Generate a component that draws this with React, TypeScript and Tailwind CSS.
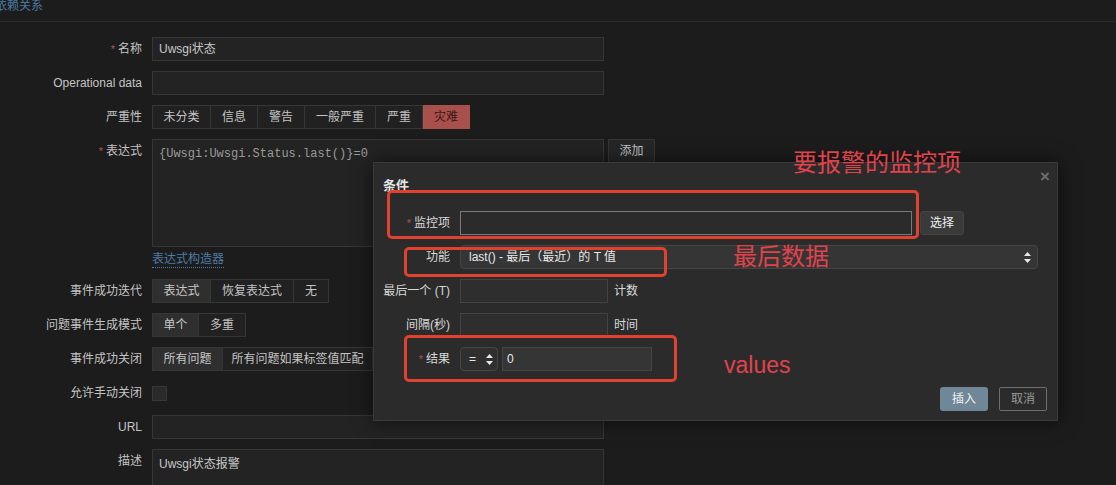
import React from "react";

const font = { fontFamily: '"Liberation Sans", "Noto Sans CJK SC", sans-serif' };

function Req() {
  return <span className="text-[#b3524c] mr-[3px] text-[11px]">*</span>;
}

function Row({ label, req, children, className = "" }: { label: React.ReactNode; req?: boolean; children: React.ReactNode; className?: string }) {
  return (
    <div className={"flex items-start gap-[10px] " + className}>
      <div className="w-[142px] h-[24px] flex items-center justify-end text-[12px] text-[#c4c4c4] whitespace-nowrap">
        {req && <Req />}
        {label}
      </div>
      <div className="flex-1">{children}</div>
    </div>
  );
}

function Input({ value, w = "w-[452px]" }: { value?: string; w?: string }) {
  return (
    <div className={`${w} h-[24px] bg-[#232323] border border-[#363636] flex items-center px-[6px] text-[12px] text-[#c8c8c8]`}>
      {value}
    </div>
  );
}

function Seg({ items, active, red }: { items: { t: string; w: string }[]; active?: number; red?: number }) {
  return (
    <div className="flex h-[24px]">
      {items.map((it, i) => (
        <div
          key={i}
          className={
            `${it.w} h-[24px] flex items-center justify-center text-[12px] border-y border-r border-[#363636] ` +
            (i === 0 ? "border-l " : "") +
            (red === i
              ? "bg-[#a8514c] text-[#3c1512] border-[#a8514c]"
              : active === i
              ? "bg-[#2f2f2f] text-[#c8c8c8]"
              : "bg-[#212121] text-[#c4c4c4]")
          }
        >
          {it.t}
        </div>
      ))}
    </div>
  );
}

function UpDown() {
  return (
    <svg width="7" height="11" viewBox="0 0 7 11">
      <path d="M3.5 0 L7 4 L0 4 Z" fill="#e8e8e8" />
      <path d="M3.5 11 L7 7 L0 7 Z" fill="#e8e8e8" />
    </svg>
  );
}

function DRow({ label, req, children, className = "" }: { label: React.ReactNode; req?: boolean; children: React.ReactNode; className?: string }) {
  return (
    <div className={"flex items-center gap-[10px] h-[24px] " + className}>
      <div className="w-[67px] flex items-center justify-end text-[12px] text-[#d8d8d8] whitespace-nowrap">
        {req && <Req />}
        {label}
      </div>
      {children}
    </div>
  );
}

export default function App() {
  return (
    <div className="relative w-[1116px] h-[485px] overflow-hidden bg-[#1c1c1c]" style={font}>
      {/* tab header */}
      <div className="h-[22px] border-b border-[#2a2a2a]">
        <div className="ml-[-5px] text-[12px] leading-[12px] text-[#4b78a1]">依赖关系</div>
      </div>

      {/* form */}
      <div className="pt-[15px] flex flex-col">
        <Row label="名称" req>
          <Input value="Uwsgi状态" />
        </Row>
        <Row label="Operational data" className="mt-[10px]">
          <Input />
        </Row>
        <Row label="严重性" className="mt-[10px]">
          <Seg
            items={[
              { t: "未分类", w: "w-[59px]" },
              { t: "信息", w: "w-[47px]" },
              { t: "警告", w: "w-[47px]" },
              { t: "一般严重", w: "w-[71px]" },
              { t: "严重", w: "w-[47px]" },
              { t: "灾难", w: "w-[47px]" },
            ]}
            red={5}
          />
        </Row>
        <Row label="表达式" req className="mt-[10px]">
          <div className="flex items-start gap-[4px]">
            <div
              className="w-[452px] h-[108px] bg-[#232323] border border-[#363636] px-[6px] pt-[5px] text-[12px] text-[#9a9a9a]"
              style={{ fontFamily: '"Liberation Mono", monospace' }}
            >
              {"{Uwsgi:Uwsgi.Status.last()}=0"}
            </div>
            <div className="w-[47px] h-[24px] bg-[#262626] border border-[#363636] flex items-center justify-center text-[12px] text-[#c4c4c4]">
              添加
            </div>
          </div>
        </Row>
        <div className="ml-[152px] mt-[5px] h-[18px] flex items-start">
          <span className="text-[12px] text-[#4e7ca6] border-b border-dotted border-[#4e7ca6] leading-[15px]">表达式构造器</span>
        </div>
        <Row label="事件成功迭代" className="mt-[9px]">
          <Seg
            items={[
              { t: "表达式", w: "w-[59px]" },
              { t: "恢复表达式", w: "w-[83px]" },
              { t: "无", w: "w-[35px]" },
            ]}
            active={0}
          />
        </Row>
        <Row label="问题事件生成模式" className="mt-[10px]">
          <Seg
            items={[
              { t: "单个", w: "w-[47px]" },
              { t: "多重", w: "w-[47px]" },
            ]}
            active={0}
          />
        </Row>
        <Row label="事件成功关闭" className="mt-[10px]">
          <Seg
            items={[
              { t: "所有问题", w: "w-[71px]" },
              { t: "所有问题如果标签值匹配", w: "w-[150px]" },
            ]}
            active={0}
          />
        </Row>
        <Row label="允许手动关闭" className="mt-[10px]">
          <div className="h-[24px] flex items-center">
            <div className="w-[15px] h-[15px] bg-[#2a2a2a] border border-[#383838]" />
          </div>
        </Row>
        <Row label="URL" className="mt-[10px]">
          <Input />
        </Row>
        <Row label="描述" className="mt-[10px]">
          <div className="w-[452px] h-[60px] bg-[#232323] border border-[#363636] px-[6px] pt-[5px] text-[12px] text-[#c8c8c8]">
            Uwsgi状态报警
          </div>
        </Row>
      </div>

      {/* dialog */}
      <div className="absolute left-[373px] top-[162px] w-[685px] h-[259px] bg-[#2b2b2b] border border-[#3a3a3a] shadow-[0_0_18px_rgba(0,0,0,0.6)] px-[9px] pt-[13px]">
        <div className="flex justify-between">
          <div className="text-[13px] font-bold text-[#e6e6e6] leading-[16px] mt-[2px]">条件</div>
          <div className="text-[17px] font-bold leading-[14px] text-[#6d6d6d] mr-[-2px] mt-[-6px]">×</div>
        </div>
        <DRow label="监控项" req className="mt-[17px]">
          <div className="w-[452px] h-[24px] bg-[#2b2b2b] border border-[#7a7a7a]" />
          <div className="ml-[-2px] w-[44px] h-[24px] rounded-[3px] bg-[#3a3a3a] border border-[#444] flex items-center justify-center text-[12px] text-[#f0f0f0]">
            选择
          </div>
        </DRow>
        <DRow label="功能" className="mt-[10px]">
          <div className="w-[578px] h-[24px] rounded-[4px] bg-[#353535] border border-[#454545] flex items-center justify-between pl-[8px] pr-[6px] text-[12px] text-[#e8e8e8]">
            <span>last() - 最后（最近）的 T 值</span>
            <UpDown />
          </div>
        </DRow>
        <DRow label="最后一个 (T)" className="mt-[10px]">
          <div className="w-[148px] h-[24px] bg-[#2e2e2e] border border-[#434343]" />
          <span className="ml-[-4px] text-[12px] text-[#d8d8d8]">计数</span>
        </DRow>
        <DRow label="间隔(秒)" className="mt-[10px]">
          <div className="w-[148px] h-[24px] bg-[#2e2e2e] border border-[#434343]" />
          <span className="ml-[-4px] text-[12px] text-[#d8d8d8]">时间</span>
        </DRow>
        <DRow label="结果" req className="mt-[10px]">
          <div className="w-[38px] h-[24px] rounded-[4px] bg-[#2f2f2f] border border-[#474747] flex items-center justify-between pl-[8px] pr-[4px] text-[12px] text-[#e8e8e8]">
            <span>=</span>
            <UpDown />
          </div>
          <div className="ml-[-6px] w-[150px] h-[24px] bg-[#353535] border border-[#454545] flex items-center px-[4px] text-[12px] text-[#e8e8e8]">
            0
          </div>
        </DRow>
        <div className="flex justify-end gap-[11px] mt-[16px] pr-[1px]">
          <div className="w-[48px] h-[24px] rounded-[3px] bg-[#6f8797] flex items-center justify-center text-[12px] text-[#f2f2f2]">
            插入
          </div>
          <div className="w-[48px] h-[24px] rounded-[2px] border border-[#6e6e6e] flex items-center justify-center text-[12px] text-[#9a9a9a]">
            取消
          </div>
        </div>
      </div>

      {/* annotations */}
      <div className="absolute left-[387px] top-[190px] w-[532px] h-[49px] border-[3px] border-[#e0422f] rounded-[5px]" />
      <div className="absolute left-[404px] top-[247px] w-[263px] h-[30px] border-[3px] border-[#e0422f] rounded-[5px]" />
      <div className="absolute left-[404px] top-[335px] w-[273px] h-[47px] border-[3px] border-[#e0422f] rounded-[5px]" />
      <div className="absolute left-[793px] top-[148px] text-[24px] leading-[30px] text-[#e0434b] whitespace-nowrap">要报警的监控项</div>
      <div className="absolute left-[733px] top-[242px] text-[24px] leading-[30px] text-[#e0434b] whitespace-nowrap">最后数据</div>
      <div className="absolute left-[724px] top-[350px] text-[23px] leading-[30px] text-[#e0434b] whitespace-nowrap">values</div>
    </div>
  );
}
